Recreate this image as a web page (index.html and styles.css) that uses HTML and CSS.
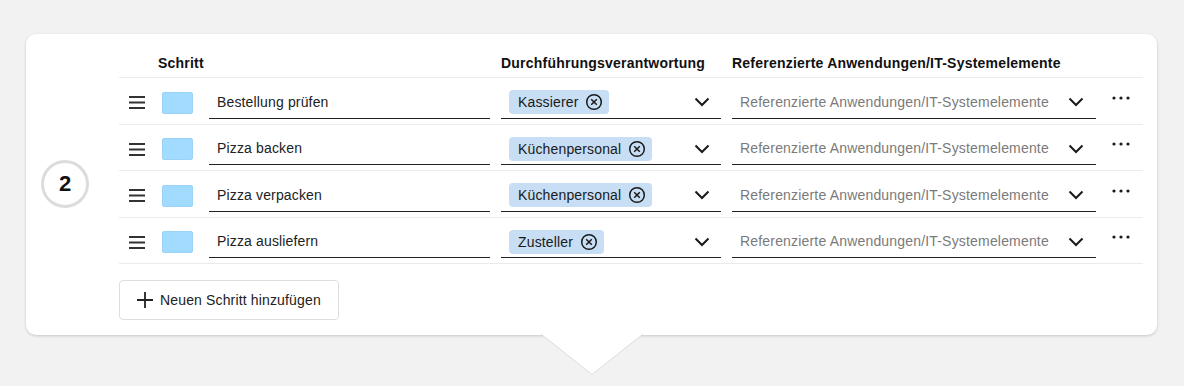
FILE: index.html
```html
<!DOCTYPE html>
<html lang="de">
<head>
<meta charset="utf-8">
<title>Schritte</title>
<link rel="stylesheet" href="styles.css">
</head>
<body>
<div class="page">
  <div class="card">
    <div class="step-col"><div class="step-num">2</div></div>
    <div class="table">
      <div class="head">
        <div class="h-schritt">Schritt</div>
        <div class="h-resp">Durchführungsverantwortung</div>
        <div class="h-ref">Referenzierte Anwendungen/IT-Systemelemente</div>
      </div>

      <div class="row">
        <div class="handle"><svg width="16" height="13" viewBox="0 0 16 13"><rect x="0" y="0" width="16" height="2"/><rect x="0" y="5.5" width="16" height="2"/><rect x="0" y="11" width="16" height="2"/></svg></div>
        <div class="swatch-cell"><span class="swatch"></span></div>
        <div class="field text-field">Bestellung prüfen</div>
        <div class="field select">
          <span class="chip">Kassierer<svg class="x" width="18" height="18" viewBox="0 0 18 18"><circle cx="9" cy="9" r="7.3"/><path d="M6.2 6.2l5.6 5.6M11.8 6.2l-5.6 5.6"/></svg></span>
          <svg class="chev" width="16" height="10" viewBox="0 0 16 10"><polyline points="1.5,1.5 8,8 14.5,1.5"/></svg>
        </div>
        <div class="field select ref">
          <span class="ph">Referenzierte Anwendungen/IT-Systemelemente</span>
          <svg class="chev" width="16" height="10" viewBox="0 0 16 10"><polyline points="1.5,1.5 8,8 14.5,1.5"/></svg>
        </div>
        <div class="more"><svg width="18" height="4" viewBox="0 0 18 4"><circle cx="2" cy="2" r="1.6"/><circle cx="9" cy="2" r="1.6"/><circle cx="16" cy="2" r="1.6"/></svg></div>
      </div>

      <div class="row">
        <div class="handle"><svg width="16" height="13" viewBox="0 0 16 13"><rect x="0" y="0" width="16" height="2"/><rect x="0" y="5.5" width="16" height="2"/><rect x="0" y="11" width="16" height="2"/></svg></div>
        <div class="swatch-cell"><span class="swatch"></span></div>
        <div class="field text-field">Pizza backen</div>
        <div class="field select">
          <span class="chip">Küchenpersonal<svg class="x" width="18" height="18" viewBox="0 0 18 18"><circle cx="9" cy="9" r="7.3"/><path d="M6.2 6.2l5.6 5.6M11.8 6.2l-5.6 5.6"/></svg></span>
          <svg class="chev" width="16" height="10" viewBox="0 0 16 10"><polyline points="1.5,1.5 8,8 14.5,1.5"/></svg>
        </div>
        <div class="field select ref">
          <span class="ph">Referenzierte Anwendungen/IT-Systemelemente</span>
          <svg class="chev" width="16" height="10" viewBox="0 0 16 10"><polyline points="1.5,1.5 8,8 14.5,1.5"/></svg>
        </div>
        <div class="more"><svg width="18" height="4" viewBox="0 0 18 4"><circle cx="2" cy="2" r="1.6"/><circle cx="9" cy="2" r="1.6"/><circle cx="16" cy="2" r="1.6"/></svg></div>
      </div>

      <div class="row">
        <div class="handle"><svg width="16" height="13" viewBox="0 0 16 13"><rect x="0" y="0" width="16" height="2"/><rect x="0" y="5.5" width="16" height="2"/><rect x="0" y="11" width="16" height="2"/></svg></div>
        <div class="swatch-cell"><span class="swatch"></span></div>
        <div class="field text-field">Pizza verpacken</div>
        <div class="field select">
          <span class="chip">Küchenpersonal<svg class="x" width="18" height="18" viewBox="0 0 18 18"><circle cx="9" cy="9" r="7.3"/><path d="M6.2 6.2l5.6 5.6M11.8 6.2l-5.6 5.6"/></svg></span>
          <svg class="chev" width="16" height="10" viewBox="0 0 16 10"><polyline points="1.5,1.5 8,8 14.5,1.5"/></svg>
        </div>
        <div class="field select ref">
          <span class="ph">Referenzierte Anwendungen/IT-Systemelemente</span>
          <svg class="chev" width="16" height="10" viewBox="0 0 16 10"><polyline points="1.5,1.5 8,8 14.5,1.5"/></svg>
        </div>
        <div class="more"><svg width="18" height="4" viewBox="0 0 18 4"><circle cx="2" cy="2" r="1.6"/><circle cx="9" cy="2" r="1.6"/><circle cx="16" cy="2" r="1.6"/></svg></div>
      </div>

      <div class="row">
        <div class="handle"><svg width="16" height="13" viewBox="0 0 16 13"><rect x="0" y="0" width="16" height="2"/><rect x="0" y="5.5" width="16" height="2"/><rect x="0" y="11" width="16" height="2"/></svg></div>
        <div class="swatch-cell"><span class="swatch"></span></div>
        <div class="field text-field">Pizza ausliefern</div>
        <div class="field select">
          <span class="chip">Zusteller<svg class="x" width="18" height="18" viewBox="0 0 18 18"><circle cx="9" cy="9" r="7.3"/><path d="M6.2 6.2l5.6 5.6M11.8 6.2l-5.6 5.6"/></svg></span>
          <svg class="chev" width="16" height="10" viewBox="0 0 16 10"><polyline points="1.5,1.5 8,8 14.5,1.5"/></svg>
        </div>
        <div class="field select ref">
          <span class="ph">Referenzierte Anwendungen/IT-Systemelemente</span>
          <svg class="chev" width="16" height="10" viewBox="0 0 16 10"><polyline points="1.5,1.5 8,8 14.5,1.5"/></svg>
        </div>
        <div class="more"><svg width="18" height="4" viewBox="0 0 18 4"><circle cx="2" cy="2" r="1.6"/><circle cx="9" cy="2" r="1.6"/><circle cx="16" cy="2" r="1.6"/></svg></div>
      </div>

      <button class="add" type="button"><svg width="16" height="16" viewBox="0 0 16 16"><path d="M8 0v16M0 8h16"/></svg><span>Neuen Schritt hinzufügen</span></button>
    </div>
    <svg class="pointer" width="102" height="42" viewBox="0 0 102 42"><polygon class="tri-fill" points="0,0 102,0 51,41"/><polyline class="tri-edge" points="0.5,0.5 51,40.5 101.5,0.5"/></svg>
  </div>
</div>
</body>
</html>
```

FILE: styles.css
```css
* { box-sizing: border-box; }
html, body { margin: 0; padding: 0; }
body {
  background: #f2f2f2;
  font-family: "Liberation Sans", Arial, sans-serif;
  color: #222;
  width: 1184px;
  height: 386px;
  overflow: hidden;
}
.page {
  padding: 34px 27px 0 26px;
}
.card {
  position: relative;
  width: 1131px;
  height: 301px;
  background: #fff;
  border-radius: 10px;
  box-shadow: 0 1px 3px rgba(0,0,0,0.18);
  display: flex;
  padding: 14px 14px 15px 0;
}
.step-col {
  width: 93px;
  flex: none;
  display: flex;
  align-items: center;
  padding-left: 15px;
  padding-bottom: 1px;
}
.step-num {
  width: 48px;
  height: 48px;
  border: 3px solid #dcdcdc;
  border-radius: 50%;
  display: flex;
  align-items: center;
  justify-content: center;
  font-weight: bold;
  font-size: 22px;
  color: #111;
  margin-top: 1px;
}
.table {
  width: 1024px;
  flex: none;
}
.head {
  display: flex;
  align-items: center;
  height: 30px;
  border-bottom: 1px solid #ebebeb;
  font-weight: bold;
  font-size: 14px;
  letter-spacing: 0.22px;
  color: #111;
}
.h-schritt { margin-left: 39px; width: 343px; }
.h-resp { width: 231px; }
.h-ref { flex: 1; }
.row {
  display: flex;
  align-items: flex-end;
  height: 46.5px;
  padding-bottom: 5px;
  border-bottom: 1px solid #ebebeb;
}
.handle {
  width: 36px;
  height: 33px;
  display: flex;
  align-items: center;
  justify-content: center;
  padding-top: 1px;
}
.handle svg { fill: #333; display: block; }
.swatch-cell {
  width: 54px;
  height: 33px;
  display: flex;
  align-items: center;
  padding-left: 7px;
  padding-top: 1px;
}
.swatch {
  display: block;
  width: 31px;
  height: 22px;
  background: #a1dbff;
  border: 1px solid #9ad3f7;
  border-radius: 2px;
}
.field {
  height: 33px;
  border-bottom: 1px solid #222;
  display: flex;
  align-items: center;
  font-size: 14px;
  padding-left: 8px;
  letter-spacing: 0.15px;
}
.text-field {
  width: 281px;
  margin-right: 11px;
}
.select {
  width: 220px;
  margin-right: 11px;
  justify-content: space-between;
  padding-right: 11px;
}
.select.ref {
  width: 364px;
  margin-right: 0;
  padding-right: 12px;
}
.ph { color: #7a7a7a; letter-spacing: 0.18px; }
.chip {
  display: inline-flex;
  align-items: center;
  height: 24px;
  padding: 0 6px 0 9px;
  background: #c7def4;
  border-radius: 4px;
  gap: 7px;
  color: #1a1a1a;
  margin-top: 1px;
}
.chip .x { fill: none; stroke: #1a1a1a; stroke-width: 1.5; display: block; }
.chev { display: block; fill: none; stroke: #1a1a1a; stroke-width: 2; margin-top: 1px; }
.more {
  width: 47px;
  height: 33px;
  display: flex;
  justify-content: center;
  align-items: flex-start;
  padding-top: 10px;
  padding-left: 3px;
}
.more svg { display: block; fill: #1a1a1a; }
.add {
  margin-top: 16px;
  width: 220px;
  height: 40px;
  background: #fff;
  border: 1px solid #dedede;
  border-radius: 4px;
  display: flex;
  align-items: center;
  gap: 7px;
  padding: 0 0 0 17px;
  font-family: "Liberation Sans", Arial, sans-serif;
  font-size: 14px;
  letter-spacing: 0.15px;
  color: #222;
  cursor: pointer;
}
.add svg { display: block; stroke: #222; stroke-width: 1.8; fill: none; }
.pointer {
  position: absolute;
  left: 515px;
  top: 300px;
  display: block;
}
.tri-fill { fill: #fff; }
.tri-edge { fill: none; stroke: #dadada; stroke-width: 1; }
```
